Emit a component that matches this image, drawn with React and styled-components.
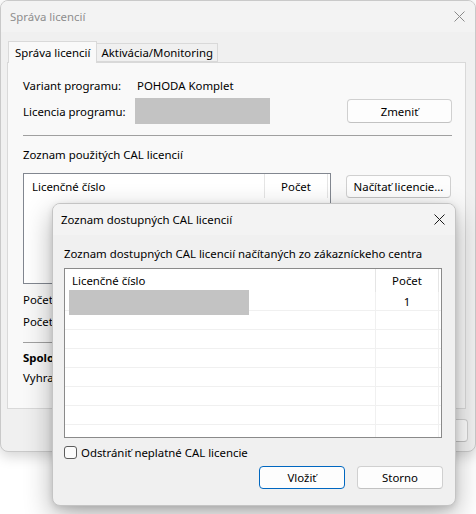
import React from "react";
import styled, { createGlobalStyle } from "styled-components";

const GlobalStyle = createGlobalStyle`
  html, body {
    margin: 0;
    padding: 0;
    background: #ffffff;
  }
  body {
    font-family: "Noto Sans", "Liberation Sans", sans-serif;
    font-size: 11.4px;
    color: #000;
  }
`;

const Desktop = styled.div`
  position: relative;
  width: 476px;
  height: 514px;
  overflow: hidden;
  background: #ffffff;
`;

// okno v pozadi
const Window = styled.div`
  position: absolute;
  left: 0;
  top: 0;
  width: 476px;
  height: 452px;
  box-sizing: border-box;
  border: 1px solid #c9c9c9;
  border-radius: 8px;
  background: #f0f0f0;
  box-shadow: 0 4px 14px rgba(0, 0, 0, 0.18);
  display: flex;
  flex-direction: column;
  overflow: hidden;
`;

const TitleBar = styled.div`
  height: ${(p) => p.$h || 31}px;
  flex: none;
  display: flex;
  align-items: center;
  justify-content: space-between;
  padding: 0 10px 0 ${(p) => p.$pl || 8}px;
  background: ${(p) => p.$bg || "#f3f3f3"};
  color: ${(p) => (p.$inactive ? "#8e8e8e" : "#000")};
`;

const CloseIcon = ({ color }) => (
  <svg width="11" height="11" viewBox="0 0 11 11">
    <path d="M0.5 0.5 L10.5 10.5 M10.5 0.5 L0.5 10.5" stroke={color} strokeWidth="1" fill="none" />
  </svg>
);

const WindowBody = styled.div`
  flex: 1;
  display: flex;
  flex-direction: column;
  padding: 9px 9px 0 6px;
`;

const TabStrip = styled.div`
  display: flex;
  align-items: flex-end;
  height: 21px;
  padding-left: 1px;
  position: relative;
  z-index: 1;
`;

const Tab = styled.div`
  box-sizing: border-box;
  height: ${(p) => (p.$active ? 22 : 19)}px;
  padding: 0 ${(p) => (p.$active ? 6 : 4)}px;
  display: flex;
  align-items: center;
  border: 1px solid #d9d9d9;
  border-bottom: ${(p) => (p.$active ? "none" : "1px solid #d9d9d9")};
  border-left: ${(p) => (p.$active ? "1px solid #d9d9d9" : "none")};
  background: ${(p) => (p.$active ? "#f9f9f9" : "#f0f0f0")};
  margin-bottom: ${(p) => (p.$active ? -1 : 0)}px;
`;

const Panel = styled.div`
  box-sizing: border-box;
  height: 347px;
  border: 1px solid #d9d9d9;
  background: #f9f9f9;
  padding: 9px 13px 0 15px;
  display: flex;
  flex-direction: column;
`;

const InfoRow = styled.div`
  height: 26px;
  display: flex;
  align-items: center;
`;

const InfoLabel = styled.div`
  width: ${(p) => p.$w || 114}px;
  flex: none;
`;

const Redacted = styled.div`
  width: ${(p) => p.$w}px;
  height: ${(p) => p.$h}px;
  background: #c3c3c3;
`;

const Spacer = styled.div`
  flex: 1;
`;

const Button = styled.div`
  box-sizing: border-box;
  width: ${(p) => p.$w}px;
  height: ${(p) => p.$h || 24}px;
  display: flex;
  align-items: center;
  justify-content: center;
  border: 1px solid ${(p) => (p.$primary ? "#0067c0" : "#d0d0d0")};
  border-bottom-color: ${(p) => (p.$primary ? "#0067c0" : "#c2c2c2")};
  border-radius: 4px;
  background: #fdfdfd;
  flex: none;
  margin-top: ${(p) => p.$mt || 0}px;
`;

const Separator = styled.div`
  height: 1px;
  background: #a0a0a0;
  margin-top: ${(p) => p.$mt}px;
`;

const Text = styled.div`
  height: ${(p) => p.$h || 16}px;
  line-height: ${(p) => p.$h || 16}px;
  margin-top: ${(p) => p.$mt || 0}px;
  font-weight: ${(p) => (p.$bold ? 700 : 400)};
  white-space: nowrap;
`;

const ListRow = styled.div`
  display: flex;
  align-items: flex-start;
  margin-top: 10px;
  gap: 15px;
`;

const ListBox = styled.div`
  box-sizing: border-box;
  width: ${(p) => p.$w}px;
  height: ${(p) => p.$h}px;
  border: 1px solid ${(p) => p.$border || "#828790"};
  margin-top: ${(p) => p.$mt || 0}px;
  background: #ffffff;
  display: flex;
  flex-direction: column;
  flex: none;
  overflow: hidden;
`;

const HeaderRow = styled.div`
  display: grid;
  grid-template-columns: 1fr 63px 2px;
  height: ${(p) => p.$h}px;
  flex: none;
`;

const HeaderCell = styled.div`
  display: flex;
  align-items: center;
  justify-content: ${(p) => (p.$center ? "center" : "flex-start")};
  padding-left: ${(p) => (p.$center ? 0 : p.$pl || 7)}px;
  border-right: 1px solid #e5e5e5;
`;

const BodyRow = styled.div`
  display: grid;
  grid-template-columns: 1fr 63px 2px;
  height: 19px;
  box-sizing: border-box;
  border-bottom: 1px solid #f0f0f0;
  flex: none;
`;

const BodyCell = styled.div`
  position: relative;
  display: flex;
  align-items: center;
  justify-content: ${(p) => (p.$center ? "center" : "flex-start")};
  border-right: 1px solid #f0f0f0;
`;

const RedactedCell = styled.div`
  position: absolute;
  left: 4px;
  top: -2px;
  width: 180px;
  height: 25px;
  background: #c3c3c3;
`;

const Footer = styled.div`
  display: flex;
  justify-content: flex-end;
  padding: 10px 0 0;
  margin-right: -2px;
`;

// dialog v popredi
const Dialog = styled.div`
  position: absolute;
  left: 52px;
  top: 203px;
  width: 404px;
  height: 303px;
  box-sizing: border-box;
  border: 1px solid #c4c4c4;
  border-radius: 8px;
  background: #f0f0f0;
  box-shadow: 0 10px 28px rgba(0, 0, 0, 0.3), 0 2px 6px rgba(0, 0, 0, 0.12);
  display: flex;
  flex-direction: column;
  overflow: hidden;
`;

const DialogBody = styled.div`
  display: flex;
  flex-direction: column;
  padding: 11px 12px 0 11px;
`;

const CheckRow = styled.div`
  display: flex;
  align-items: center;
  gap: 4px;
  margin-top: 7px;
  height: 15px;
`;

const Checkbox = styled.div`
  box-sizing: border-box;
  width: 13px;
  height: 13px;
  border: 1px solid #5c5c5c;
  border-radius: 3px;
  background: #fbfbfb;
`;

const ButtonRow = styled.div`
  display: flex;
  justify-content: flex-end;
  gap: 12px;
  margin-top: 6px;
`;

export default function App() {
  const emptyRows = [1, 2, 3, 4, 5, 6, 7];
  return (
    <>
      <GlobalStyle />
      <Desktop>
        <Window>
          <TitleBar $h={31} $pl={9} $inactive>
            <span>Správa licencií</span>
            <CloseIcon color="#8a8a8a" />
          </TitleBar>
          <WindowBody>
            <TabStrip>
              <Tab $active>Správa licencií</Tab>
              <Tab>Aktivácia/Monitoring</Tab>
            </TabStrip>
            <Panel>
              <InfoRow>
                <InfoLabel>Variant programu:</InfoLabel>
                <span>POHODA Komplet</span>
              </InfoRow>
              <InfoRow>
                <InfoLabel $w={112}>Licencia programu:</InfoLabel>
                <Redacted $w={135} $h={26} />
                <Spacer />
                <Button $w={105}>Zmeniť</Button>
              </InfoRow>
              <Separator $mt={11} />
              <Text $mt={11}>Zoznam použitých CAL licencií</Text>
              <ListRow>
                <ListBox $w={308} $h={111}>
                  <HeaderRow $h={24}>
                    <HeaderCell $pl={8}>Licenčné číslo</HeaderCell>
                    <HeaderCell $center>Počet</HeaderCell>
                    <div />
                  </HeaderRow>
                </ListBox>
                <Button $w={105} $h={23} $mt={2}>
                  Načítať licencie...
                </Button>
              </ListRow>
              <Text $h={22} $mt={5}>Počet použitých licencií</Text>
              <Text $h={22}>Počet dostupných licencií</Text>
              <Separator $mt={9} />
              <Text $h={20} $mt={5} $bold>Spoločnosť</Text>
              <Text $h={20}>Vyhradené</Text>
            </Panel>
            <Footer>
              <Button $w={95} $h={23}>Zavrieť</Button>
            </Footer>
          </WindowBody>
        </Window>

        <Dialog>
          <TitleBar $h={31} $pl={8} $bg="#f3f3f3">
            <span>Zoznam dostupných CAL licencií</span>
            <CloseIcon color="#1a1a1a" />
          </TitleBar>
          <DialogBody>
            <Text>Zoznam dostupných CAL licencií načítaných zo zákazníckeho centra</Text>
            <ListBox $w={378} $h={170} $mt={6} $border="#8a8a8a">
              <HeaderRow $h={23}>
                <HeaderCell>Licenčné číslo</HeaderCell>
                <HeaderCell $center>Počet</HeaderCell>
                <div />
              </HeaderRow>
              <BodyRow>
                <BodyCell>
                  <RedactedCell />
                </BodyCell>
                <BodyCell $center>1</BodyCell>
                <div />
              </BodyRow>
              {emptyRows.map((r) => (
                <BodyRow key={r}>
                  <BodyCell />
                  <BodyCell />
                  <div />
                </BodyRow>
              ))}
            </ListBox>
            <CheckRow>
              <Checkbox />
              <span>Odstrániť neplatné CAL licencie</span>
            </CheckRow>
            <ButtonRow>
              <Button $w={86} $h={23} $primary>Vložiť</Button>
              <Button $w={86} $h={23}>Storno</Button>
            </ButtonRow>
          </DialogBody>
        </Dialog>
      </Desktop>
    </>
  );
}
